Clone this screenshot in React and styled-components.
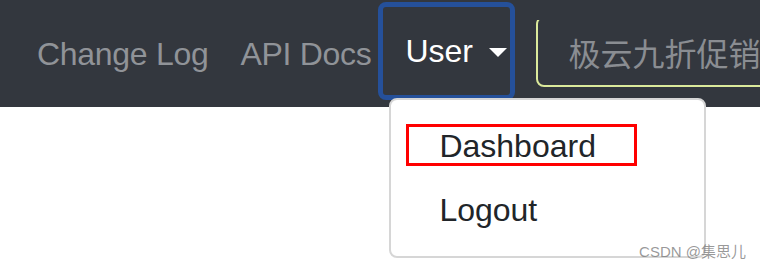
import React from "react";
import styled, { createGlobalStyle } from "styled-components";

const Global = createGlobalStyle`
  html, body { margin: 0; padding: 0; background: #fff; }
  body { font-family: "Liberation Sans", Arial, "Noto Sans CJK SC", sans-serif; width: 760px; height: 270px; overflow: hidden; }
`;

const Page = styled.div`
  position: relative;
  width: 760px;
  height: 270px;
  overflow: hidden;
  background: #fff;
`;

const Navbar = styled.nav`
  display: flex;
  align-items: center;
  height: 107px;
  padding-left: 20px;
  background: #33373e;
  box-sizing: border-box;
`;

const NavLink = styled.a`
  display: flex;
  align-items: center;
  padding: 0 ${(p) => p.$pad || 17}px;
  font-size: 32px;
  line-height: 48px;
  letter-spacing: -0.3px;
  color: #909398;
  text-decoration: none;
  white-space: nowrap;
`;

const DropdownWrap = styled.div`
  position: relative;
  display: flex;
  align-items: center;
  margin-left: -8px;
`;

const Toggle = styled.div`
  display: flex;
  align-items: center;
  box-sizing: border-box;
  height: 98px;
  width: 137px;
  margin-top: -5px;
  padding-left: 22px;
  border: 5px solid #25509a;
  border-radius: 8px;
  font-size: 32px;
  color: #fff;
`;

const Caret = styled.span`
  display: inline-block;
  margin-left: 16px;
  width: 0;
  height: 0;
  border-top: 9px solid #fff;
  border-left: 9px solid transparent;
  border-right: 9px solid transparent;
  margin-top: 2px;
`;

const Menu = styled.div`
  position: absolute;
  left: 11px;
  top: 91px;
  width: 317px;
  height: 160px;
  box-sizing: border-box;
  padding: 14px 0;
  background: #fff;
  border: 2px solid #d6d6d6;
  border-radius: 8px;
  z-index: 2;
`;

const MenuItem = styled.div`
  position: relative;
  padding: 8px 48px;
  font-size: 32px;
  line-height: 48px;
  color: #212529;
`;

const Highlight = styled.span`
  position: absolute;
  left: 15px;
  top: 10px;
  width: 231px;
  height: 42px;
  box-sizing: border-box;
  border: 3px solid #ff0000;
`;

const SearchClip = styled.div`
  flex: 1 1 auto;
  min-width: 0;
  overflow: hidden;
  margin-left: 21px;
  display: flex;
`;

const Search = styled.div`
  flex: 0 0 auto;
  width: 420px;
  height: 71px;
  margin-top: -4px;
  box-sizing: border-box;
  border: 2px solid #dbe99b;
  border-radius: 8px;
  display: flex;
  align-items: center;
  padding-left: 30px;
  font-size: 32px;
  color: #8a8d92;
  font-family: "Noto Sans CJK SC", sans-serif;
  white-space: nowrap;
`;

const Watermark = styled.div`
  position: absolute;
  right: 14px;
  bottom: 9px;
  z-index: 3;
  font-size: 15px;
  color: rgba(120, 120, 120, 0.75);
  font-family: "Liberation Sans", "Noto Sans CJK SC", sans-serif;
`;

export default function App() {
  return (
    <Page>
      <Global />
      <Navbar>
        <NavLink>Change Log</NavLink>
        <NavLink $pad={15}>API Docs</NavLink>
        <DropdownWrap>
          <Toggle>
            User
            <Caret />
          </Toggle>
          <Menu>
            <MenuItem>
              <Highlight />
              Dashboard
            </MenuItem>
            <MenuItem>Logout</MenuItem>
          </Menu>
        </DropdownWrap>
        <SearchClip>
          <Search>极云九折促销</Search>
        </SearchClip>
      </Navbar>
      <Watermark>CSDN @集思儿</Watermark>
    </Page>
  );
}
